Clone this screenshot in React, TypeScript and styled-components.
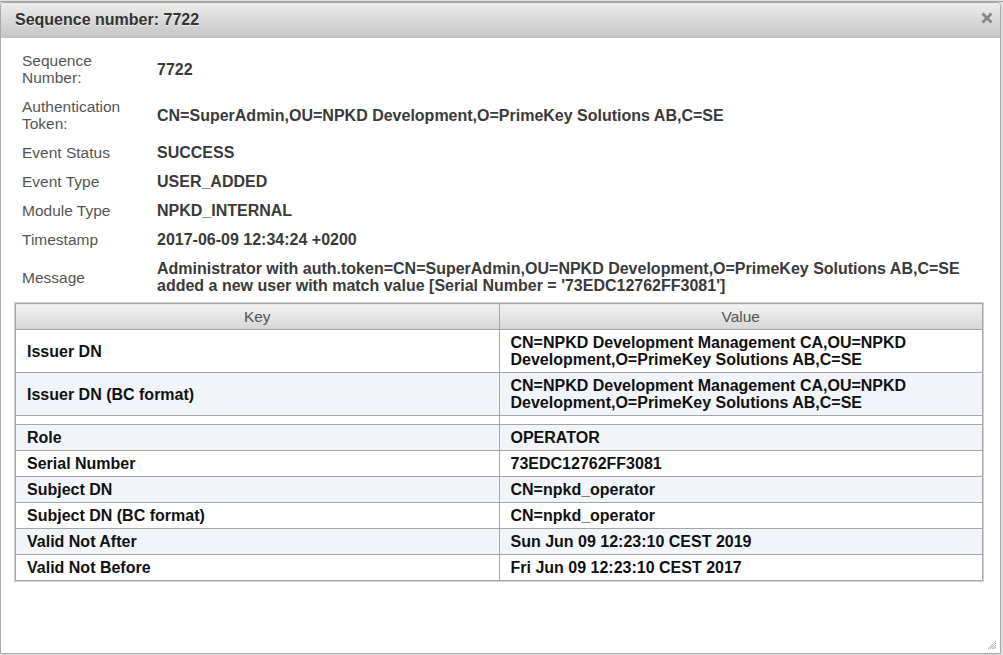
import React from "react";
import styled, { createGlobalStyle } from "styled-components";

const Global = createGlobalStyle`
  html, body {
    margin: 0;
    padding: 0;
    width: 1003px;
    height: 655px;
    overflow: hidden;
    background: linear-gradient(to bottom, #e2e2e2 0px, #e2e2e2 1px, #a4a4a4 1px, #a4a4a4 2px, #dcdcdc 2px);
    font-family: "Liberation Sans", Arial, sans-serif;
  }
`;

const Page = styled.div`
  padding-top: 2px;
  display: flex;
  height: 655px;
  box-sizing: border-box;
`;

const Dialog = styled.div`
  position: relative;
  width: 1001px;
  height: 652px;
  box-sizing: border-box;
  background: #fff;
  border: 1px solid #a9a9a9;
  border-radius: 4px 4px 0 0;
  display: flex;
  flex-direction: column;
  overflow: hidden;
`;

const TitleBar = styled.div`
  height: 34px;
  flex: none;
  display: flex;
  align-items: center;
  justify-content: space-between;
  padding: 0 7px 0 14px;
  background: linear-gradient(to bottom, #ededed, #c6c6c6);
  border-bottom: 1px solid #c0c0c0;
`;

const Title = styled.span`
  font-weight: bold;
  font-size: 16px;
  color: #333;
  text-shadow: 0 1px 0 rgba(255, 255, 255, 0.6);
`;

const Close = styled.span`
  display: flex;
  width: 12px;
  height: 12px;
  margin-top: -4px;
`;

const Content = styled.div`
  padding: 8px 17px 0 14px;
`;

const InfoGrid = styled.div`
  display: grid;
  grid-template-columns: 135px 1fr;
  align-items: center;
`;

const Label = styled.div`
  padding: 6px 7px;
  font-size: 15.5px;
  line-height: 17px;
  color: #555;
  width: 105px;
`;

const Value = styled.div`
  padding: 6px 0 6px 7px;
  font-size: 16px;
  line-height: 17px;
  font-weight: bold;
  color: #3a3a3a;
`;

const Table = styled.table`
  width: 968px;
  border-collapse: collapse;
  border: 1px solid #a6a6a6;
  box-shadow: 0 0 0 1px #d2d2d2;
  font-size: 16px;
  margin-top: 3px;
`;

const HeadCell = styled.th`
  height: 25px;
  padding: 0;
  font-weight: normal;
  font-size: 15.5px;
  color: #555;
  text-align: center;
  background: linear-gradient(to bottom, #f3f3f3, #d6d6d6);
  border: 1px solid #a6a6a6;
  width: 50%;
`;

const Row = styled.tr<{ $alt: boolean }>`
  background: ${(p) => (p.$alt ? "#f1f4f9" : "#fff")};
`;

const Cell = styled.td`
  padding: 4px 11px;
  line-height: 17px;
  font-weight: bold;
  color: #111;
  border: 1px solid #a6a6a6;
  vertical-align: middle;
`;

const Grip = styled.span`
  position: absolute;
  right: 3px;
  bottom: 3px;
  width: 10px;
  height: 10px;
  display: flex;
`;

const info: [string, React.ReactNode][] = [
  ["Sequence Number:", "7722"],
  ["Authentication Token:", "CN=SuperAdmin,OU=NPKD Development,O=PrimeKey Solutions AB,C=SE"],
  ["Event Status", "SUCCESS"],
  ["Event Type", "USER_ADDED"],
  ["Module Type", "NPKD_INTERNAL"],
  ["Timestamp", "2017-06-09 12:34:24 +0200"],
  [
    "Message",
    "Administrator with auth.token=CN=SuperAdmin,OU=NPKD Development,O=PrimeKey Solutions AB,C=SE added a new user with match value [Serial Number = '73EDC12762FF3081']",
  ],
];

const rows: [string, string][] = [
  ["Issuer DN", "CN=NPKD Development Management CA,OU=NPKD Development,O=PrimeKey Solutions AB,C=SE"],
  ["Issuer DN (BC format)", "CN=NPKD Development Management CA,OU=NPKD Development,O=PrimeKey Solutions AB,C=SE"],
  ["", ""],
  ["Role", "OPERATOR"],
  ["Serial Number", "73EDC12762FF3081"],
  ["Subject DN", "CN=npkd_operator"],
  ["Subject DN (BC format)", "CN=npkd_operator"],
  ["Valid Not After", "Sun Jun 09 12:23:10 CEST 2019"],
  ["Valid Not Before", "Fri Jun 09 12:23:10 CEST 2017"],
];

export default function App() {
  return (
    <>
      <Global />
      <Page>
        <Dialog>
          <TitleBar>
            <Title>Sequence number: 7722</Title>
            <Close>
              <svg viewBox="0 0 12 12" width="12" height="12">
                <path d="M2.5 2.5 L9.5 9.5 M9.5 2.5 L2.5 9.5" stroke="#868686" strokeWidth="2.8" strokeLinecap="square" />
              </svg>
            </Close>
          </TitleBar>
          <Content>
            <InfoGrid>
              {info.map(([k, v]) => (
                <React.Fragment key={k}>
                  <Label>{k}</Label>
                  <Value>{v}</Value>
                </React.Fragment>
              ))}
            </InfoGrid>
            <Table>
              <thead>
                <tr>
                  <HeadCell>Key</HeadCell>
                  <HeadCell>Value</HeadCell>
                </tr>
              </thead>
              <tbody>
                {rows.map(([k, v], i) => (
                  <Row key={i} $alt={i % 2 === 1}>
                    <Cell>{k}</Cell>
                    <Cell>{v}</Cell>
                  </Row>
                ))}
              </tbody>
            </Table>
          </Content>
          <Grip>
            <svg viewBox="0 0 10 10" width="10" height="10">
              <path d="M9 3 L3 9 M9 5 L5 9 M9 7 L7 9 M9 1 L1 9" stroke="#999" strokeWidth="0.8" />
            </svg>
          </Grip>
        </Dialog>
      </Page>
    </>
  );
}
